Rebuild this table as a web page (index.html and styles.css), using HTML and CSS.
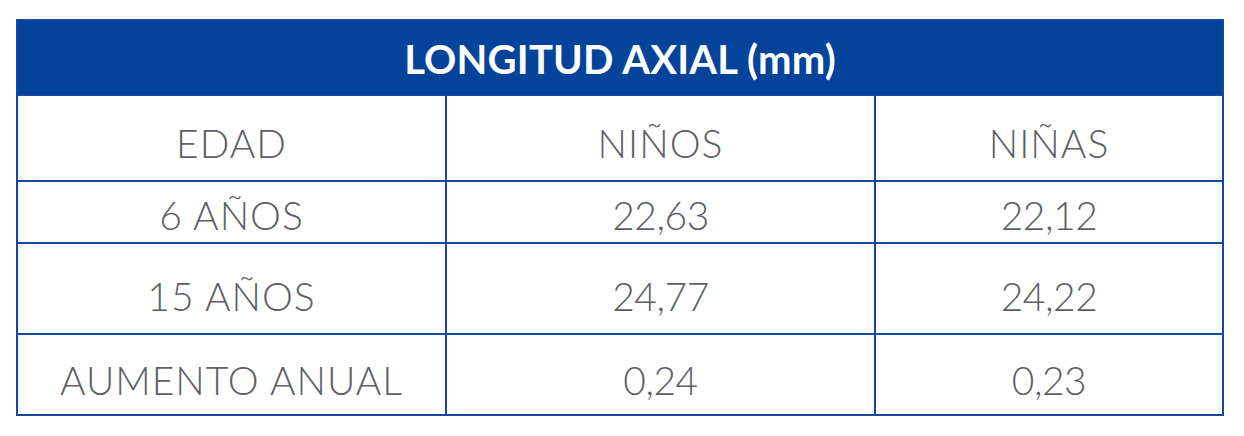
FILE: index.html
```html
<!DOCTYPE html>
<html lang="es">
<head>
  <meta charset="UTF-8" />
  <title>Longitud axial</title>
  <link rel="stylesheet" href="styles.css">
</head>
<body>

<table class="axial">
  <colgroup>
    <col class="c-edad">
    <col class="c-ninos">
    <col class="c-ninas">
  </colgroup>
  <tr class="title-row">
    <th colspan="3">LONGITUD AXIAL (mm)</th>
  </tr>
  <tr class="r1">
    <td>EDAD</td>
    <td>NIÑOS</td>
    <td>NIÑAS</td>
  </tr>
  <tr class="r2">
    <td>6 AÑOS</td>
    <td class="num">22,63</td>
    <td class="num">22,12</td>
  </tr>
  <tr class="r3">
    <td>15 AÑOS</td>
    <td class="num">24,77</td>
    <td class="num">24,22</td>
  </tr>
  <tr class="r4">
    <td>AUMENTO ANUAL</td>
    <td class="num">0,24</td>
    <td class="num">0,23</td>
  </tr>
</table>

</body>
</html>
```

FILE: styles.css
```css
body {
  margin: 0;
  background: #fff;
  font-family: "Lato", "Open Sans", sans-serif;
}
.axial {
  margin: 19px 0 0 16px;
  width: 1206px;
  border-collapse: collapse;
  table-layout: fixed;
}
.c-edad { width: 429px; }
.c-ninos { width: 429px; }
.c-ninas { width: 348px; }
.axial th,
.axial td {
  border: 2px solid #1549a0;
  text-align: center;
  padding: 0;
}
.title-row th {
  height: 71px;
  background: #03449a;
  color: #fff;
  font-weight: 700;
  font-size: 40px;
  letter-spacing: 0.2px;
  padding-top: 2px;
}
.axial td {
  color: #5e5f66;
  font-weight: 300;
  font-size: 39px;
  letter-spacing: 1px;
}
.axial td.num { letter-spacing: -0.5px; }
.r1 td { height: 74px; padding-top: 10px; }
.r2 td { height: 54px; padding-top: 6px; }
.r3 td { height: 75px; padding-top: 14px; }
.r4 td { height: 69px; padding-top: 10px; }
```
